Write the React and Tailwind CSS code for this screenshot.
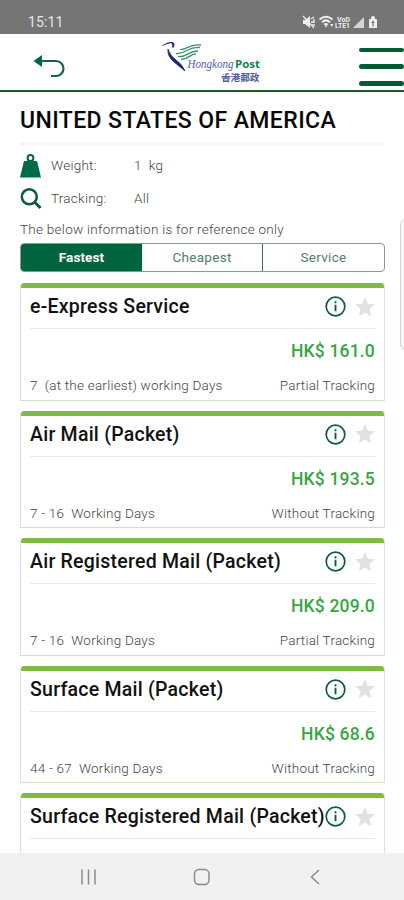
import React from "react";

const services = [
  { name: "e-Express Service", price: "161.0", days: "7  (at the earliest) working Days", tracking: "Partial Tracking" },
  { name: "Air Mail (Packet)", price: "193.5", days: "7 - 16  Working Days", tracking: "Without Tracking" },
  { name: "Air Registered Mail (Packet)", price: "209.0", days: "7 - 16  Working Days", tracking: "Partial Tracking" },
  { name: "Surface Mail (Packet)", price: "68.6", days: "44 - 67  Working Days", tracking: "Without Tracking" },
  { name: "Surface Registered Mail (Packet)", price: "", days: "", tracking: "" },
];

function StatusBar() {
  return (
    <div className="flex h-[34px] shrink-0 items-center justify-between bg-[#757575] pt-[9px] pr-6 pl-[28px] text-[#e6e6e6]">
      <span className="text-[14px] leading-none tracking-[0.1px]">15:11</span>
      <svg width="78" height="14" viewBox="0 0 78 14" fill="#eeeeee">
        <path d="M1 5h2l5-4v12l-5-4H1z" />
        <path d="M1 1l11 12M9 4l3-2M9 7h4M12 4v3M10 10h3" stroke="#eeeeee" strokeWidth="1.3" fill="none" />
        <path d="M17.500 4.500q6.500-5.500 13 0M20 7.200q4-3.700 8 0M22.300 9.800q1.700-1.700 3.400 0" stroke="#eeeeee" strokeWidth="2" fill="none" />
        <path d="M22.500 10.500h3l-1.500 2zM28 9h3.500L29.800 12z" />
        <text x="35" y="6.500" fontSize="6.500" fontWeight="700" textLength="13" lengthAdjust="spacingAndGlyphs">VoD</text>
        <text x="33" y="13" fontSize="7" fontWeight="700" textLength="15" lengthAdjust="spacingAndGlyphs">LTE1</text>
        <path d="M51 13L62 2v11z" opacity="0.8" />
        <path d="M67 13V5q0-1 1-1h1q0-3 2-3t2 3h1q1 0 1 1v8z" />
        <path d="M71 5.500v6M69.500 7.500h3" stroke="#757575" strokeWidth="1.200" />
      </svg>
    </div>
  );
}

function Logo() {
  return (
    <svg width="104" height="44" viewBox="0 0 104 44" className="ml-[92px]">
      <path d="M3 6.500Q9 1.500 14 2q3.500.5 2 5l-2 1q1-4-1-5Q9 3.500 3 6.500z" fill="#1d2580" />
      <path d="M10 9q-1 7 6 13l11 9q-3-7-9-11Q12 16 10 9z" fill="#1d2580" stroke="#1d2580" strokeWidth="0.8" />
      <g fill="none" stroke="#35936b" strokeWidth="1.300">
        <path d="M22 9.500c7 1 8-6 21-4.500" />
        <path d="M18 13.500c10 1 11-7 24-6" />
        <path d="M20 16.500c10 1 10-6 20-5.500" />
        <path d="M23 19.500c8 0 9-6 15-5.500" />
      </g>
      <text x="29.500" y="28" fill="#5861a5" fontFamily="Liberation Serif, serif" fontStyle="italic" fontSize="12" textLength="46" lengthAdjust="spacingAndGlyphs">Hongkong</text>
      <text x="77" y="28" fill="#158052" fontFamily="Open Sans, sans-serif" fontWeight="700" fontSize="11" textLength="25" lengthAdjust="spacingAndGlyphs">Post</text>
      <text x="63" y="41" fill="#5059a0" fontFamily="Noto Sans CJK TC, sans-serif" fontWeight="700" fontSize="9.500" textLength="38.500" lengthAdjust="spacingAndGlyphs">香港郵政</text>
    </svg>
  );
}

function Header() {
  return (
    <header className="flex h-[58px] shrink-0 items-start border-b-2 border-[#1c5a2d] bg-white">
      <svg width="33" height="24" viewBox="0 0 33 24" className="mt-5 ml-[33px]" fill="none">
        <path d="M6 7h17a7.300 7.300 0 0 1 0 15h-5" stroke="#176341" strokeWidth="2.200" />
        <path d="M.5 7L9 1v12z" fill="#00673f" />
      </svg>
      <div className="mt-[6px]">
        <Logo />
      </div>
      <div className="mt-[13.500px] ml-auto flex w-[45px] flex-col gap-[12.300px]">
        <span className="h-[4.500px] rounded-full bg-[#005c35]" />
        <span className="h-[4.500px] rounded-full bg-[#005c35]" />
        <span className="h-[4.500px] rounded-full bg-[#005c35]" />
      </div>
    </header>
  );
}

function WeightIcon() {
  return (
    <svg width="22" height="24" viewBox="0 0 22 24">
      <circle cx="10.500" cy="4" r="2.900" fill="none" stroke="#05653f" strokeWidth="2" />
      <path d="M5 7h11q1 0 1.300 1L21 23.500H0L3.700 8Q4 7 5 7z" fill="#006b48" />
    </svg>
  );
}

function SearchIcon() {
  return (
    <svg width="22" height="22" viewBox="0 0 22 22" fill="none" stroke="#075b3b" strokeWidth="2.500">
      <circle cx="9.300" cy="8.800" r="7.500" />
      <path d="M14.500 14l6 6" strokeWidth="3" />
    </svg>
  );
}

function DetailRow({ icon, label, value }) {
  return (
    <div className="flex h-[33px] items-center text-[13.500px] font-light tracking-[0.25px] text-[#444]">
      <span className="flex w-[31px]">{icon}</span>
      <span className="w-[83px]">{label}</span>
      <span className="whitespace-pre">{value}</span>
    </div>
  );
}

function Tabs() {
  return (
    <div className="grid h-[29px] grid-cols-3 overflow-hidden rounded-[4px] border border-[#8b9994] text-center text-[13.500px] leading-[27px] tracking-[0.3px] text-[#557b6e]">
      <div className="bg-[#00653f] font-bold tracking-[0.1px] text-white">Fastest</div>
      <div className="border-r border-[#426e5e]">Cheapest</div>
      <div>Service</div>
    </div>
  );
}

function ServiceCard({ service }) {
  return (
    <div className="h-[117.500px] shrink-0 overflow-hidden rounded-t-[4px] border border-t-0 border-[#dce2dc] border-b-[#c9e3c4] bg-white">
      <div className="h-[5px] bg-[#7dbb42]" />
      <div className="px-[9px]">
        <div className="flex h-[41px] items-center border-b border-[#e8e8e8] pb-[3px]">
          <h2 className="pt-px text-[19.500px] font-medium tracking-[0.240px] whitespace-nowrap text-[#111]">{service.name}</h2>
          <div className="ml-auto flex shrink-0 items-center gap-[9px]">
            <svg width="21" height="21" viewBox="0 0 21 21" fill="none" stroke="#0b5c43">
              <circle cx="10.500" cy="10.500" r="9.300" strokeWidth="1.700" />
              <path d="M10.500 8.700v6.500M10.500 5.300v2" strokeWidth="1.900" />
            </svg>
            <svg width="20" height="20" viewBox="0 0 20 20" fill="#e1e1e1">
              <path d="M10 0l2.800 6.700 7.200.6-5.500 4.700 1.700 7.200L10 15.400l-6.200 3.800L5.500 12 0 7.300l7.200-.6z" />
            </svg>
          </div>
        </div>
        {service.price ? (
          <>
            <div className="mt-[10px] text-right text-[17.500px] leading-[25px] font-medium tracking-[0.180px] text-[#3aa545]">
              HK$ {service.price}
            </div>
            <div className="mt-[13px] flex justify-between text-[13.500px] leading-4 font-light tracking-[0.220px] whitespace-pre text-[#444]">
              <span>{service.days}</span>
              <span>{service.tracking}</span>
            </div>
          </>
        ) : null}
      </div>
    </div>
  );
}

function NavBar() {
  return (
    <div className="flex h-[47px] shrink-0 items-center bg-[#f1f1f1] pt-px pl-[80px]">
      <svg width="244" height="20" viewBox="0 0 244 20" fill="none" stroke="#8a8a8a" strokeWidth="1.500">
        <path d="M2 2.500v15M8.500 2.500v15M15 2.500v15" />
        <rect x="114.500" y="2.500" width="14.500" height="15" rx="4.500" />
        <path d="M239 3l-7.500 7 7.500 7" />
      </svg>
    </div>
  );
}

export default function App() {
  return (
    <div className="relative flex h-[900px] w-[404px] flex-col overflow-hidden bg-white font-[Roboto,sans-serif]">
      <StatusBar />
      <Header />
      <main className="min-h-0 flex-1 overflow-hidden pr-[19px] pl-5">
        <h1 className="flex h-[53px] items-center border-b-2 border-[#f3f3f3] pt-[7px] text-[23px] font-medium tracking-[0.400px] whitespace-nowrap text-[#080808]">
          UNITED STATES OF AMERICA
        </h1>
        <div className="mt-1">
          <DetailRow icon={<WeightIcon />} label="Weight:" value="1  kg" />
          <DetailRow icon={<SearchIcon />} label="Tracking:" value="All" />
        </div>
        <p className="flex h-[28px] items-center text-[13.500px] font-light tracking-[0.270px] text-[#444]">
          The below information is for reference only
        </p>
        <Tabs />
        <div className="mt-[11px] flex flex-col gap-[10px]">
          {services.map((service) => (
            <ServiceCard key={service.name} service={service} />
          ))}
        </div>
      </main>
      <NavBar />
      <div className="absolute top-[219px] -right-2 h-[131px] w-3 rounded-md border-[1.500px] border-[#d4d4d4] bg-[#f8f8f8]" />
    </div>
  );
}
